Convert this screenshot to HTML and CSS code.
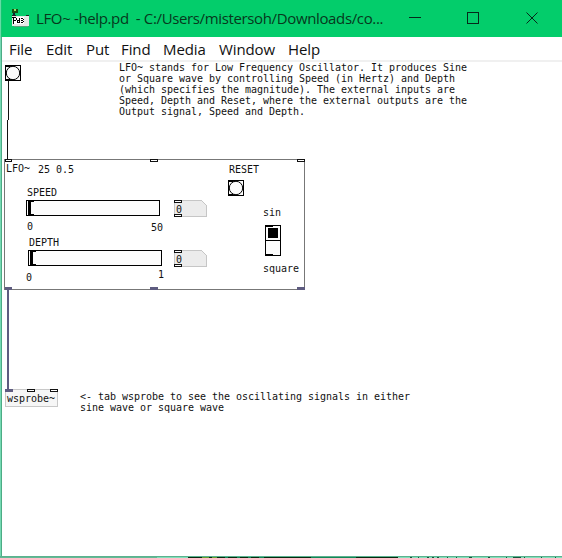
FILE: index.html
```html
<!DOCTYPE html>
<html lang="en">
<head>
<meta charset="utf-8">
<title>LFO~ -help.pd</title>
<link rel="stylesheet" href="styles.css">
</head>
<body>
<div class="window">
  <header class="titlebar">
    <svg class="app-icon" width="18" height="20" viewBox="0 0 18 20" shape-rendering="crispEdges">
      <path d="M0 1h6v4H0z" fill="#174f12"/><path d="M2 1h2v2H2z" fill="#9adc62"/><path d="M1 5h2v3H1z" fill="#123"/>
      <path d="M0 8h17v10H0z" fill="#e4e8e6"/><path d="M0 7h4v1H0zM14 7h3v1h-3z" fill="#222"/><path d="M1 9h11v7H1z" fill="#fff"/>
      <path d="M0 9h4v1H0zM1 10h1v6H1zM4 10h1v2H4zM2 12h2v1H2zM5 12h2v1H5zM5 13h1v2H5zM6 14h2v1H6zM7 10h1v5H7zM9 10h2v1H9zM11 11h1v1h-1zM9 12h2v1H9zM11 13h1v1h-1zM9 14h2v1H9z" fill="#000"/>
      <path d="M2 18h14v1H2z" fill="#5c9d7c"/>
    </svg>
    <span class="title">LFO~ -help.pd&nbsp; - C:/Users/mistersoh/Downloads/co...</span>
    <svg class="controls" width="140" height="37" viewBox="0 0 140 37">
      <path d="M0 17.5h12M58.500 12.500h11v11h-11z" shape-rendering="crispEdges"/>
      <path d="M117.500 12.500l11 11M128.500 12.500l-11 11"/>
    </svg>
  </header>
  <nav class="menu"><span class="m-file">File</span><span class="m-edit">Edit</span><span class="m-put">Put</span><span class="m-find">Find</span><span class="m-media">Media</span><span class="m-window">Window</span><span class="m-help">Help</span></nav>
  <main class="patch">
    <svg class="canvas" width="560" height="495" viewBox="2 62 560 495">
      <g shape-rendering="crispEdges">
        <path class="cord" d="M8 81h1v39H8zM7 120h1v39H7z"/>
        <path class="signal" d="M7 290h2v100H7z"/>
        <rect class="frame" x="4.500" y="159.500" width="300" height="130"/>
        <path class="inlet" d="M5.500 159.500h6v2h-6zM150.500 159.500h7v2h-7zM297.500 159.500h7v2h-7z"/>
        <path class="signal" d="M5 287h7v3H5zM150 287h8v3h-8zM297 287h8v3h-8z"/>

        <rect class="widget" x="26.500" y="200.500" width="133" height="15"/>
        <path d="M28 201h3v15h-3zM31 201h3v1h-3zM31 214h3v1h-3z"/>
        <rect class="widget" x="28.500" y="250.500" width="133" height="15"/>
        <path d="M30 251h3v15h-3zM33 251h3v1h-3zM33 264h3v1h-3z"/>

        <path class="number" d="M174.500 200.500h27l5 5v11h-32zM174.500 250.500h27l5 5v11h-32z"/>
        <path class="inlet" d="M174.500 200.500h7v2h-7zM174.500 214.500h7v2h-7zM174.500 250.500h7v2h-7zM174.500 264.500h7v2h-7z"/>

        <rect class="widget" x="5.500" y="65.500" width="15" height="15"/>
        <rect class="widget" x="228.500" y="180.500" width="15" height="15"/>
        <path d="M5 79h7v1H5zM5 66h7v1H5zM228 194h7v1h-7zM228 181h7v1h-7z"/>

        <path class="widget" d="M265.500 225.500h15v30h-15zM265.500 240.500h15"/>
        <path d="M268 228h10v10h-10zM266 226h7v1h-7zM266 254h7v1h-7z"/>

        <rect class="object" x="5.500" y="389.500" width="52" height="17"/>
        <path class="signal" d="M5 389h8v3H5z"/>
        <path class="inlet" d="M27.500 389.500h7v2h-7zM50.500 389.500h7v2h-7z"/>
      </g>
      <circle class="widget" cx="13" cy="73" r="6.700"/>
      <circle class="widget" cx="236" cy="188" r="6.700"/>
      <g class="text">
        <text x="119" y="71">LFO~ stands for Low Frequency Oscillator. It produces Sine</text>
        <text x="119" y="82">or Square wave by controlling Speed (in Hertz) and Depth</text>
        <text x="119" y="93">(which specifies the magnitude). The external inputs are</text>
        <text x="119" y="104">Speed, Depth and Reset, where the external outputs are the</text>
        <text x="119" y="115">Output signal, Speed and Depth.</text>
        <text x="6" y="172">LFO~</text><text x="38" y="173">25 0.5</text>
        <text x="27" y="196">SPEED</text><text x="27" y="230">0</text><text x="151" y="231">50</text>
        <text x="29" y="246">DEPTH</text><text x="26" y="281">0</text><text x="158" y="278">1</text>
        <text x="176" y="213">0</text><text x="176" y="263">0</text>
        <text x="229" y="173">RESET</text><text x="263" y="216">sin</text><text x="263" y="272">square</text>
        <text x="7" y="402">wsprobe~</text>
        <text x="80" y="400">&lt;- tab wsprobe to see the oscillating signals in either</text>
        <text x="80" y="411">sine wave or square wave</text>
      </g>
    </svg>
  </main>
  <svg class="bottom-edge" width="562" height="2" viewBox="0 0 562 2" shape-rendering="crispEdges">
    <path fill="#5bb28e" d="M0 0h562v1H0z"/><path fill="#62b896" d="M0 1h157v1H0z"/><path fill="#80dfbb" d="M157 1h31v1h-31zM398 1h164v1H398z"/>
    <path fill="#06280f" d="M188 1h210v1H188z"/><path fill="#679c30" d="M202 1h7v1h-7zM212 1h5v1h-5z"/><path fill="#128657" d="M225 1h3v1h-3zM237 1h3v1h-3zM248 1h3v1h-3zM259 1h5v1h-5zM311 1h45v1h-45z"/>
    <path fill="#17533c" d="M410 1h2v1h-2zM418 1h1v1h-1zM427 1h2v1h-2zM432 1h2v1h-2zM437 1h2v1h-2zM447 1h1v1h-1zM456 1h1v1h-1zM469 1h3v1h-3zM488 1h2v1h-2zM506 1h1v1h-1zM513 1h8v1h-8zM524 1h1v1h-1zM541 1h1v1h-1zM555 1h1v1h-1z"/>
  </svg>
</div>
</body>
</html>
```
FILE: styles.css
```css
body { margin: 0; overflow: hidden; background: #fff; }
.window {
  box-sizing: border-box;
  width: 562px;
  height: 558px;
  display: flex;
  flex-direction: column;
  background: linear-gradient(90deg, #75d9b3 0 1px, #4cac85 1px 2px, #fff 2px);
}
.titlebar {
  height: 37px;
  flex: none;
  display: flex;
  background: linear-gradient(90deg, #65dca5 0 1px, #16c572 1px 2px, #03cd6b 2px);
}
.app-icon { flex: none; margin: 8px 6px 0 12px; }
.title {
  width: 373px;
  flex: none;
  font: 15px/37px "Open Sans", "Noto Sans", sans-serif;
  letter-spacing: -0.36px;
  white-space: nowrap;
  color: #07381d;
}
.controls { flex: none; fill: none; stroke: #06291a; stroke-width: 1; }
.menu {
  height: 25px;
  flex: none;
  box-sizing: border-box;
  margin-left: 2px;
  padding-left: 7px;
  display: flex;
  border-bottom: 2px solid #f0f0f0;
  font: 15px/25px "Open Sans", "Noto Sans", sans-serif;
  letter-spacing: -0.1px;
  color: #111;
}
.menu span { flex: none; }
.m-file { width: 37px; }
.m-edit { width: 40px; }
.m-put { width: 35px; }
.m-find { width: 42px; }
.m-media { width: 56px; }
.m-window { width: 69px; }
.patch { height: 494px; flex: none; margin-left: 2px; overflow: hidden; }
.canvas { display: block; }
.cord { fill: #111; }
.signal { fill: #5e5c80; }
.frame { fill: none; stroke: #777; }
.inlet { fill: #fff; stroke: #111; }
.widget { fill: #fcfcfc; stroke: #000; }
.number { fill: #ececec; stroke: #c6c6c6; }
.object { fill: #f6f6f6; stroke: #c8c8c8; }
.text { font: 10px "DejaVu Sans Mono", monospace; letter-spacing: -0.02px; fill: #111; white-space: pre; }
.bottom-edge { display: block; flex: none; }
```
